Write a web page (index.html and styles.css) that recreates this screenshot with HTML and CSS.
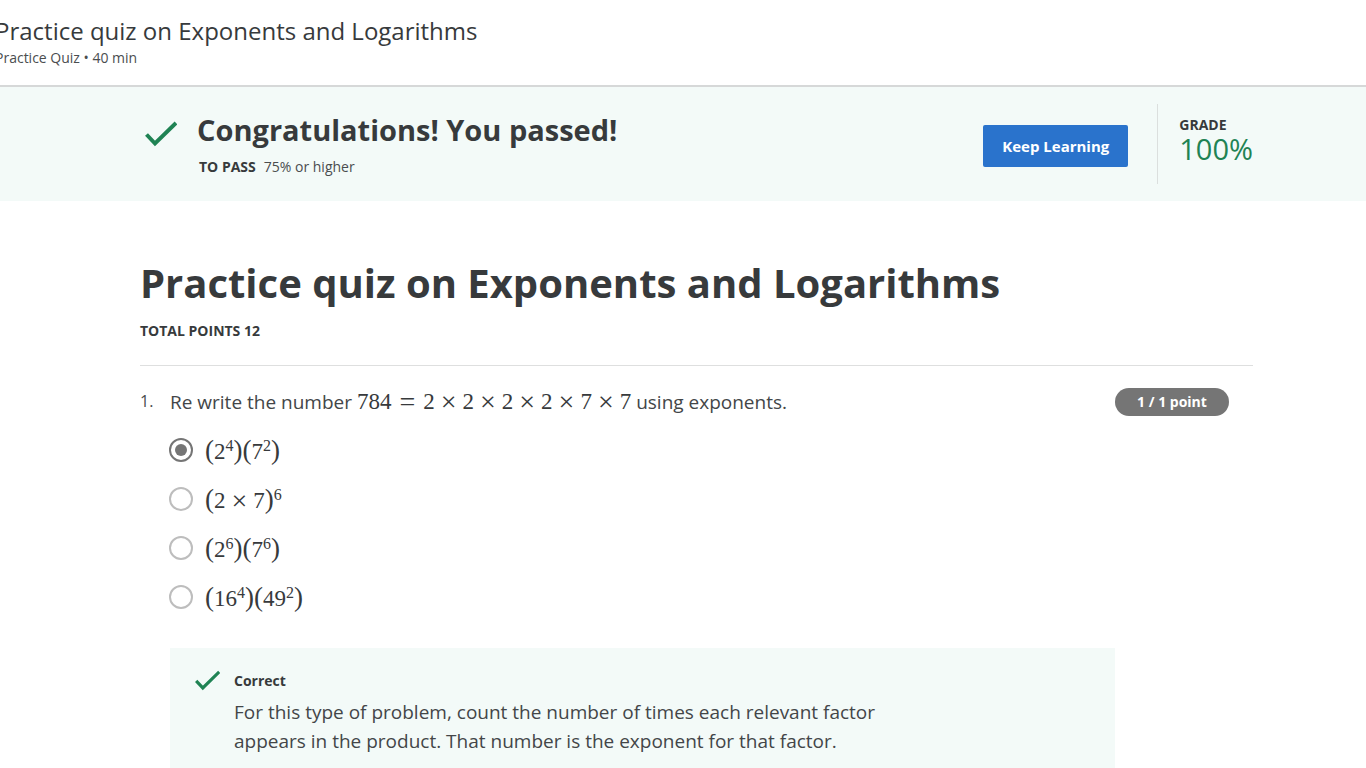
FILE: index.html
```html
<!DOCTYPE html>
<html lang="en">
<head>
<meta charset="utf-8">
<meta name="viewport" content="width=device-width, initial-scale=1">
<title>Practice quiz on Exponents and Logarithms</title>
<link rel="stylesheet" href="styles.css">
</head>
<body>
<header class="topbar">
  <p class="topbar-title">Practice quiz on Exponents and Logarithms</p>
  <p class="topbar-meta">Practice Quiz • 40 min</p>
</header>
<section class="banner">
  <div class="banner-inner">
    <svg class="banner-check" viewBox="0 0 32 26" aria-hidden="true"><path d="M1.500 13.500 10 22.500 31 2"/></svg>
    <div class="banner-text">
      <h2 class="banner-title">Congratulations! You passed!</h2>
      <p class="banner-rule"><strong>TO PASS</strong><span>75% or higher</span></p>
    </div>
    <button class="keep" type="button">Keep Learning</button>
    <div class="grade"><span class="grade-label">GRADE</span><span class="grade-value">100%</span></div>
  </div>
</section>
<main class="quiz">
  <h1 class="quiz-title">Practice quiz on Exponents and Logarithms</h1>
  <p class="quiz-points">TOTAL POINTS 12</p>
  <form class="question">
    <span class="number">1.</span>
    <div class="question-body">
      <p class="prompt" id="prompt">Re write the number <span class="math">784<i class="op rel">=</i>2<i class="op">×</i>2<i class="op">×</i>2<i class="op">×</i>2<i class="op">×</i>7<i class="op">×</i>7</span> using exponents.</p>
      <div class="options" role="radiogroup" aria-labelledby="prompt">
        <label class="option"><input type="radio" name="answer" checked><span class="math"><b>(</b>2<sup>4</sup><b>)(</b>7<sup>2</sup><b>)</b></span></label>
        <label class="option"><input type="radio" name="answer"><span class="math"><b>(</b>2<i class="op">×</i>7<b>)</b><sup>6</sup></span></label>
        <label class="option"><input type="radio" name="answer"><span class="math"><b>(</b>2<sup>6</sup><b>)(</b>7<sup>6</sup><b>)</b></span></label>
        <label class="option"><input type="radio" name="answer"><span class="math"><b>(</b>16<sup>4</sup><b>)(</b>49<sup>2</sup><b>)</b></span></label>
      </div>
      <div class="feedback">
        <svg class="feedback-check" viewBox="0 0 32 26" aria-hidden="true"><path d="M1.500 13.500 10 22.500 31 2"/></svg>
        <div class="feedback-text">
          <h3 class="feedback-title">Correct</h3>
          <p class="feedback-copy">For this type of problem, count the number of times each relevant factor appears in the product. That number is the exponent for that factor.</p>
        </div>
      </div>
    </div>
    <span class="points">1 / 1 point</span>
  </form>
</main>
</body>
</html>
```

FILE: styles.css
```css
* { box-sizing: border-box; }
html { scrollbar-width: none; }
body { margin: 0; background: #fff; color: #373a3c; font-family: "Open Sans", "Noto Sans", sans-serif; overflow-x: hidden; }
h1, h2, h3, p { margin: 0; }

.topbar { padding: 15px 0 17px; border-bottom: 2px solid #d6d8d8; }
.topbar-title, .topbar-meta { margin-left: -5px; white-space: nowrap; }
.topbar-title { font-size: 24px; line-height: 32px; }
.topbar-meta { padding-top: 1px; color: #4a4d4f; font-size: 14px; line-height: 20px; }

.banner { background: #f3faf8; }
.banner-inner { display: flex; align-items: center; min-height: 114px; padding: 0 113px 0 145px; }
.banner-check { width: 32px; height: 26px; margin: 0 20px 20px 0; }
.banner-check path, .feedback-check path { fill: none; stroke: #1f8354; stroke-width: 4; }
.banner-text { flex: 1; }
.banner-title { font-size: 29px; line-height: 38px; font-weight: 700; }
.banner-rule { display: flex; gap: 8px; padding: 8px 0 0 2px; font-size: 14px; line-height: 20px; }
.banner-rule span { color: #4a4d4f; }
.banner-rule strong { font-weight: 700; }
.keep { padding: 0 19px; height: 42px; margin-top: 4px; border: 0; border-radius: 2px; background: #2a73cc; color: #fff; font: 700 15px/20px "Open Sans", sans-serif; }
.grade { display: flex; flex-direction: column; height: 80px; margin-left: 29px; padding: 12px 0 0 21px; border-left: 1px solid #dbdfde; }
.grade-label { font-size: 14px; line-height: 18px; font-weight: 700; }
.grade-value { color: #1f8354; font-size: 29px; line-height: 30px; }

.quiz { padding: 54px 113px 0 140px; }
.quiz-title { font-size: 40px; line-height: 56px; font-weight: 700; }
.quiz-points { padding: 10px 0 24px; border-bottom: 1px solid #dedfdf; font-size: 14px; line-height: 20px; font-weight: 700; }
.question { display: flex; align-items: flex-start; padding: 22px 24px 0 0; }
.number { width: 30px; padding-top: 3px; color: #4a4d4f; font-size: 16px; line-height: 20px; }
.question-body { flex: 1; }
.prompt { color: #434648; font-size: 19px; line-height: 28px; }
.math { color: #373a3c; font-family: "Liberation Serif", serif; font-size: 23px; line-height: 28px; }
.math .op { margin: 0 6px; font-size: 28px; font-style: normal; line-height: 0; vertical-align: -2px; }
.math .rel { margin: 0 8px; }
.math b { font-size: 27px; font-weight: 400; line-height: 0; }
.math sup { font-size: 16px; line-height: 0; vertical-align: 8px; }
.options { display: grid; gap: 21px; padding: 22px 0 0; }
.option { display: flex; align-items: center; gap: 12px; line-height: 28px; }
.option input { appearance: none; display: grid; place-items: center; width: 24px; height: 24px; margin: 0 0 4px -1px; border: 2px solid #bdbdbd; border-radius: 50%; }
.option input:checked { border-color: #757575; }
.option input:checked::before { content: ""; width: 12px; height: 12px; border-radius: 50%; background: #757575; }
.feedback { display: flex; align-items: flex-start; gap: 14px; margin-top: 35px; padding: 22px 24px 32px 25px; background: #f3faf8; }
.feedback-check { flex: none; width: 25px; height: 21px; }
.feedback-text { flex: 1; max-width: 680px; }
.feedback-title { font-size: 14px; line-height: 22px; font-weight: 700; }
.feedback-copy { padding-top: 6px; color: #434648; font-size: 19px; line-height: 29px; }
.points { width: 114px; border-radius: 14px; background: #757575; color: #fff; font-size: 14px; line-height: 28px; font-weight: 700; text-align: center; }
```
